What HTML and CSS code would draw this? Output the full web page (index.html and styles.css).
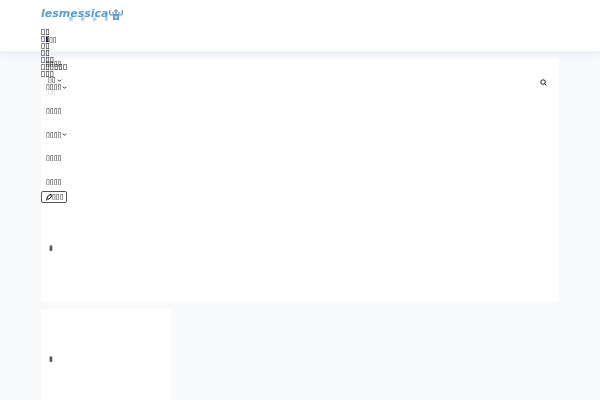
FILE: index.html
```html
<!DOCTYPE html>
<html lang="zh">
<head>
<meta charset="utf-8">
<title>lesmessica</title>
<meta name="viewport" content="width=device-width, initial-scale=1">
<link rel="stylesheet" href="styles.css">
</head>
<body>
<header class="header">
  <a class="logo" href="#">
    <span class="logo-words"><span class="logo-name">lesmessica</span><span class="logo-sub"><span>樂</span><span>斯</span><span>美</span><span>思</span></span></span>
    <svg class="logo-mark" viewBox="0 0 14 12" aria-hidden="true">
      <path d="M.7 1v3q0 2 2 2h8.600q2 0 2-2V1M7 0v7M5 2h4M4 3v2M10 3v2" fill="none" stroke="#5791bd" stroke-width="1.2"/>
      <path d="M4 5h6v6H4z" fill="#5c9dce" stroke="none"/>
      <path d="M5.500 8h3M7 7v3" stroke="#d9ebf7" stroke-width="1"/>
    </svg>
  </a>
  <div class="menu">
    <ul class="links">
      <li><a href="#">▯▯</a></li>
      <li><a href="#">▯▯</a></li>
      <li><a href="#">▯▯</a></li>
      <li><a href="#">▯▯</a></li>
      <li><a href="#">▯▯▯</a></li>
      <li><a href="#">▯▯▯▯▯▯</a></li>
      <li><a href="#">▯▯▯</a></li>
    </ul>
    <nav class="nav">
      <a class="current" href="#"><i class="dot"></i>▯▯</a>
      <a href="#">▯▯▯▯</a>
      <a href="#">▯▯▯▯<svg class="chevron" viewBox="0 0 6 6" aria-hidden="true"><path d="M1 2l2 2 2-2"/></svg></a>
      <a href="#">▯▯▯▯</a>
      <a href="#">▯▯▯▯<svg class="chevron" viewBox="0 0 6 6" aria-hidden="true"><path d="M1 2l2 2 2-2"/></svg></a>
      <a href="#">▯▯▯▯</a>
      <a href="#">▯▯▯▯</a>
    </nav>
    <button class="write" type="button"><svg class="pen" viewBox="0 0 6 8" aria-hidden="true"><path d="M.5 7.500L1.500 3.500L5 1L5.300 4L3 6L1.500 6"/></svg>▯▯▯</button>
  </div>
</header>
<main class="main">
  <section class="card hero">
    <form class="search">
      <button class="kind" type="button">▯▯<svg class="chevron" viewBox="0 0 6 6" aria-hidden="true"><path d="M1 2l2 2 2-2"/></svg></button>
      <button class="find" type="submit" aria-label="Search"><svg viewBox="0 0 8 8" aria-hidden="true"><circle cx="3.500" cy="3.500" r="2.600"/><path d="M5.500 5.500L7.300 7.300"/></svg></button>
    </form>
    <p class="hint">▯▯</p>
    <h2 class="mark hero-mark">▮</h2>
  </section>
  <section class="card tile">
    <h2 class="mark">▮</h2>
  </section>
</main>
</body>
</html>
```

FILE: styles.css
```css
* { box-sizing: border-box; }
body {
  display: flex;
  flex-direction: column;
  min-height: 100vh;
  margin: 0;
  background: #f7f9fb;
  color: #000;
  font: 7px/8px "DejaVu Sans", sans-serif;
}
a { color: inherit; text-decoration: none; }
button { border: 0; padding: 0; background: none; color: inherit; font: inherit; }
svg { fill: none; stroke: currentColor; }
.header {
  position: relative;
  padding: 9px 41px 30px;
  background: #fff;
  box-shadow: 0 2px 8px #e2eaf1;
}
.logo, .menu, .search, .hint, .mark { will-change: transform; }
.logo { display: flex; height: 12px; color: #5c9dce; }
.logo-words { display: flex; flex-direction: column; }
.logo-name { font: italic bold 11px/9px "DejaVu Sans", sans-serif; }
.logo-sub {
  display: flex;
  justify-content: space-between;
  padding-left: 28px;
  font: 4px/3px "Noto Sans CJK TC", sans-serif;
}
.logo-mark { width: 14px; height: 12px; }
.menu { position: absolute; top: 28px; left: 41px; z-index: 1; }
.links {
  position: absolute;
  top: 0;
  left: 0;
  margin: 0;
  padding: 0;
  list-style: none;
  font-size: 8px;
  line-height: 7px;
  white-space: nowrap;
}
.nav { display: grid; grid-auto-rows: 1fr; height: 166px; padding-left: 5px; }
.nav a { display: flex; align-items: center; }
.current .dot { width: 2px; height: 5px; margin-right: 1px; background: #33338f; }
.chevron { width: 5px; height: 5px; margin-left: 1px; }
.write {
  position: absolute;
  top: 163px;
  left: 0;
  display: flex;
  align-items: center;
  height: 12px;
  padding: 0 2px 0 4px;
  border: 1px solid #555;
  border-radius: 2px;
}
.pen { width: 6px; height: 8px; }
.main { display: flex; flex: 1; flex-direction: column; gap: 7px; padding: 7px 41px 0; }
.card { background: #fff; }
.hero { height: 244px; padding: 18px 12px 0 7px; }
.search { display: flex; align-items: flex-start; justify-content: space-between; height: 10px; }
.kind { display: flex; align-items: center; }
.find { display: flex; align-self: flex-end; }
.find svg { width: 7px; height: 7px; }
.hint { margin: 2px 0 0; color: #bbb; }
.mark { margin: 0; padding-left: 1px; font-size: 7px; line-height: 8px; color: #456; }
.hero-mark { padding-top: 148px; }
.tile { flex: 1; width: 25%; padding: 46px 7px 0; }
```
